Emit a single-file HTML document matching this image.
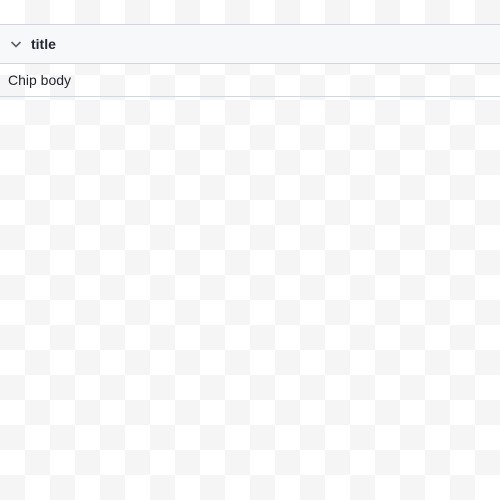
<!DOCTYPE html>
<html><head><style>
html,body{margin:0;padding:0;width:500px;height:500px;overflow:hidden}
body{
background:conic-gradient(#f5f5f6 25%,#fff 0 50%,#f5f5f6 0 75%,#fff 0);
background-size:50px 50px;
font-family:"Liberation Sans",sans-serif;}
.hdr{position:absolute;top:24px;left:0;width:500px;height:38px;background:#f6f8fa;border-top:1px solid #d0d7de;border-bottom:1px solid #d0d7de}
.hdr svg{position:absolute;left:10px;top:14px}
.hdr span{position:absolute;left:31px;top:11px;font-weight:bold;font-size:14px;color:#24292f}
.body{position:absolute;top:64px;left:0;width:500px;height:32px;border-bottom:1px solid #d0d7de}
.body span{position:absolute;left:8px;top:8px;font-size:14px;color:#24292f}
</style></head><body>
<div class="hdr"><svg width="12" height="10" viewBox="0 0 12 10"><path d="M1.5 3 L6 7.5 L10.5 3" fill="none" stroke="#57606a" stroke-width="1.6"/></svg><span>title</span></div>
<div class="body"><span>Chip body</span></div>
</body></html>
